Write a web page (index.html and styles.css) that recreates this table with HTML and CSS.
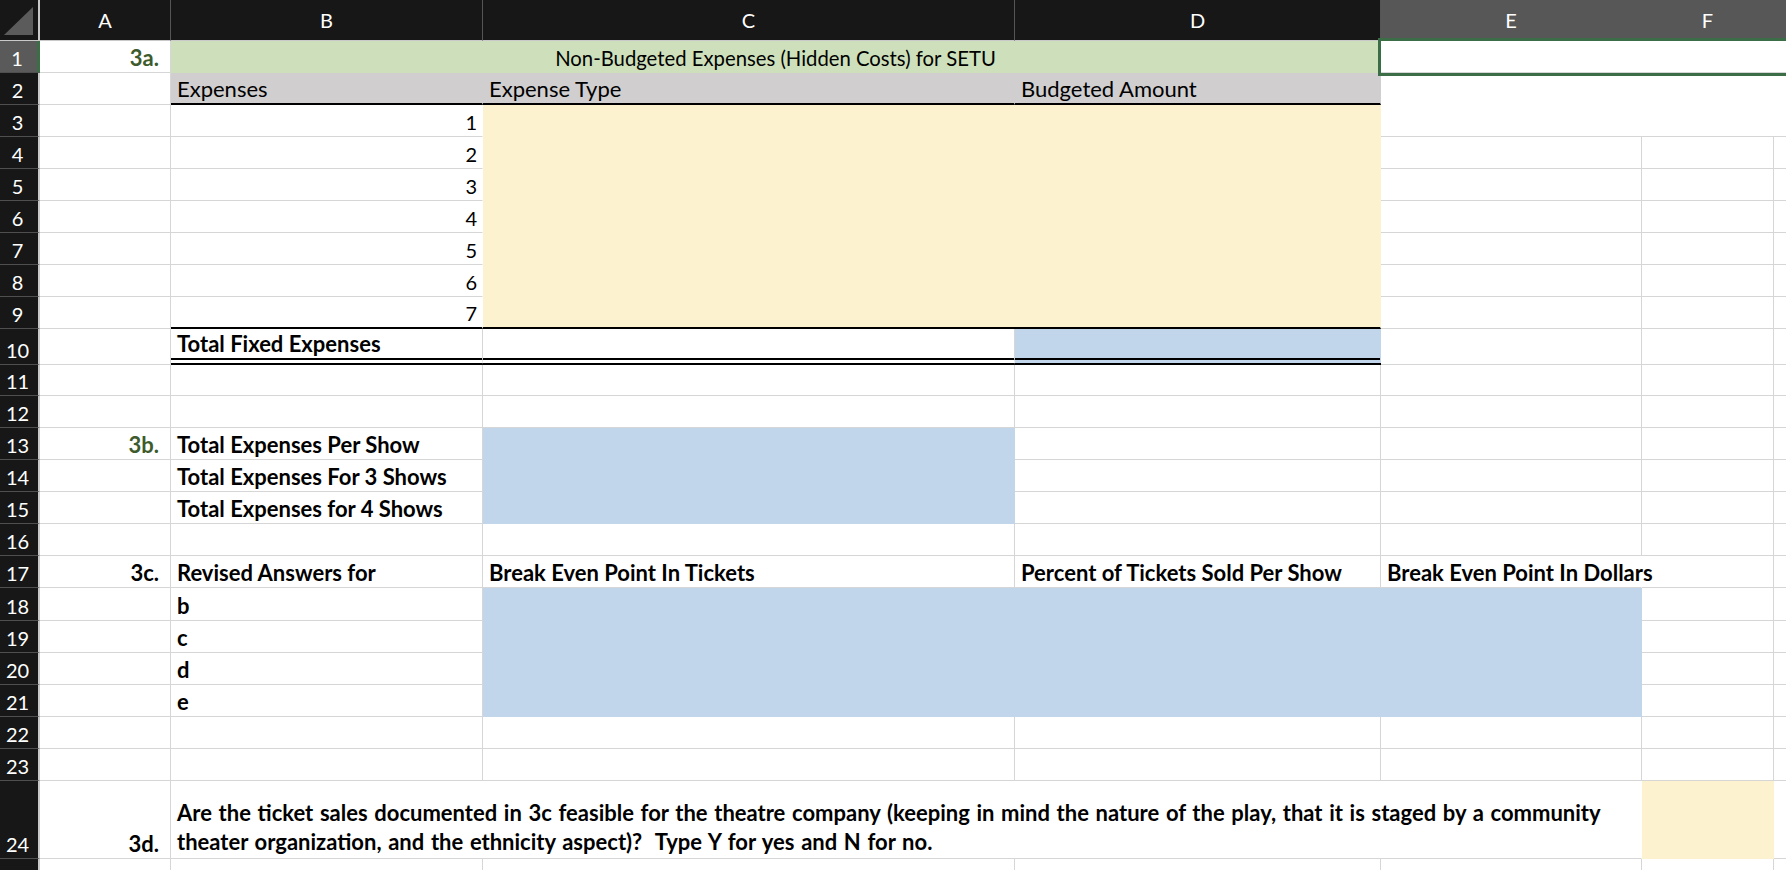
FILE: index.html
```html
<!DOCTYPE html>
<html>
<head>
<meta charset="utf-8">
<link rel="stylesheet" href="styles.css">
</head>
<body>
<div class="sheet">
  <!-- header row -->
  <div class="corner"><svg width="38" height="40" viewBox="0 0 38 40"><polygon points="4,35 33,35 33,7" fill="#5b5b5b"/></svg></div>
  <div class="ch">A</div>
  <div class="ch">B</div>
  <div class="ch">C</div>
  <div class="ch">D</div>
  <div class="ch sel">E</div>
  <div class="ch sel">F</div>
  <div class="ch sel"></div>

  <!-- row 1 -->
  <div class="rh rh-sel">1</div>
  <div class="c colA green b">3a.</div>
  <div class="c title span3">Non-Budgeted Expenses (Hidden Costs) for SETU</div>
  <div class="c selcell span3"><span class="selbox"></span></div>

  <!-- row 2 -->
  <div class="rh">2</div>
  <div class="c"></div>
  <div class="c gray bk2">Expenses</div>
  <div class="c gray bk2">Expense Type</div>
  <div class="c gray bk2">Budgeted Amount</div>
  <div class="c blank-e"></div>

  <!-- row 3 -->
  <div class="rh">3</div>
  <div class="c"></div>
  <div class="c num nor">1</div>
  <div class="c cream cream-block"></div>

  <!-- row 4 -->
  <div class="rh">4</div>
  <div class="c"></div>
  <div class="c num nor">2</div>
  <div class="c"></div><div class="c"></div><div class="c"></div>

  <!-- row 5 -->
  <div class="rh">5</div>
  <div class="c"></div>
  <div class="c num nor">3</div>
  <div class="c"></div><div class="c"></div><div class="c"></div>

  <!-- row 6 -->
  <div class="rh">6</div>
  <div class="c"></div>
  <div class="c num nor">4</div>
  <div class="c"></div><div class="c"></div><div class="c"></div>

  <!-- row 7 -->
  <div class="rh">7</div>
  <div class="c"></div>
  <div class="c num nor">5</div>
  <div class="c"></div><div class="c"></div><div class="c"></div>

  <!-- row 8 -->
  <div class="rh">8</div>
  <div class="c"></div>
  <div class="c num nor">6</div>
  <div class="c"></div><div class="c"></div><div class="c"></div>

  <!-- row 9 -->
  <div class="rh">9</div>
  <div class="c"></div>
  <div class="c num nor bk2">7</div>
  <div class="c"></div><div class="c"></div><div class="c"></div>

  <!-- row 10 -->
  <div class="rh">10</div>
  <div class="c"></div>
  <div class="c b dbl">Total Fixed Expenses</div>
  <div class="c dbl"></div>
  <div class="c blue dbl"></div>
  <div class="c"></div><div class="c"></div><div class="c"></div>

  <!-- row 11 -->
  <div class="rh">11</div>
  <div class="c"></div><div class="c"></div><div class="c"></div><div class="c"></div><div class="c"></div><div class="c"></div><div class="c"></div>

  <!-- row 12 -->
  <div class="rh">12</div>
  <div class="c"></div><div class="c"></div><div class="c"></div><div class="c"></div><div class="c"></div><div class="c"></div><div class="c"></div>

  <!-- row 13 -->
  <div class="rh">13</div>
  <div class="c colA green b">3b.</div>
  <div class="c b">Total Expenses Per Show</div>
  <div class="c blue rows3"></div>
  <div class="c"></div><div class="c"></div><div class="c"></div><div class="c"></div>

  <!-- row 14 -->
  <div class="rh">14</div>
  <div class="c"></div>
  <div class="c b">Total Expenses For 3 Shows</div>
  <div class="c"></div><div class="c"></div><div class="c"></div><div class="c"></div>

  <!-- row 15 -->
  <div class="rh">15</div>
  <div class="c"></div>
  <div class="c b">Total Expenses for 4 Shows</div>
  <div class="c"></div><div class="c"></div><div class="c"></div><div class="c"></div>

  <!-- row 16 -->
  <div class="rh">16</div>
  <div class="c"></div><div class="c"></div><div class="c"></div><div class="c"></div><div class="c"></div><div class="c"></div><div class="c"></div>

  <!-- row 17 -->
  <div class="rh">17</div>
  <div class="c colA b">3c.</div>
  <div class="c b">Revised Answers for</div>
  <div class="c b">Break Even Point In Tickets</div>
  <div class="c b">Percent of Tickets Sold Per Show</div>
  <div class="c b nor">Break Even Point In Dollars</div>
  <div class="c"></div>
  <div class="c"></div>

  <!-- row 18 -->
  <div class="rh">18</div>
  <div class="c"></div>
  <div class="c b">b</div>
  <div class="c blue blue-block"></div>
  <div class="c"></div><div class="c"></div>

  <!-- row 19 -->
  <div class="rh">19</div>
  <div class="c"></div>
  <div class="c b">c</div>
  <div class="c"></div><div class="c"></div>

  <!-- row 20 -->
  <div class="rh">20</div>
  <div class="c"></div>
  <div class="c b">d</div>
  <div class="c"></div><div class="c"></div>

  <!-- row 21 -->
  <div class="rh">21</div>
  <div class="c"></div>
  <div class="c b">e</div>
  <div class="c"></div><div class="c"></div>

  <!-- row 22 -->
  <div class="rh">22</div>
  <div class="c"></div><div class="c"></div><div class="c"></div><div class="c"></div><div class="c"></div><div class="c"></div><div class="c"></div>

  <!-- row 23 -->
  <div class="rh">23</div>
  <div class="c"></div><div class="c"></div><div class="c"></div><div class="c"></div><div class="c"></div><div class="c"></div><div class="c"></div>

  <!-- row 24 -->
  <div class="rh">24</div>
  <div class="c colA b">3d.</div>
  <div class="c b question span4">Are the ticket sales documented in 3c feasible for the theatre company (keeping in mind the nature of the play, that it is staged by a community<br>theater organization, and the ethnicity aspect)?&nbsp; Type Y for yes and N for no.</div>
  <div class="c cream"></div>
  <div class="c"></div>

  <!-- row 25 -->
  <div class="rh">25</div>
  <div class="c"></div><div class="c"></div><div class="c"></div><div class="c"></div><div class="c"></div><div class="c"></div><div class="c"></div>
</div>
</body>
</html>
```
FILE: styles.css
```css
html, body {
  margin: 0;
  padding: 0;
  background: #ffffff;
  overflow: hidden;
}

.sheet {
  display: grid;
  grid-template-columns: 40px 131px 312px 532px 366px 261px 132px 1fr;
  grid-template-rows: 41px repeat(9, 32px) 36px 31px repeat(6, 32px) 33px repeat(5, 32px) 78px 40px;
  width: 1786px;
  height: 870px;
  overflow: hidden;
  font-family: Lato, "Liberation Sans", sans-serif;
  font-size: 20px;
  color: #000;
}

.corner {
  background: #171717;
  border-right: 2px solid #c9c9c9;
  border-bottom: 1px solid #c9c9c9;
  box-sizing: border-box;
}
.corner svg { display: block; }

.ch {
  box-sizing: border-box;
  background: #171717;
  color: #fff;
  border-right: 1px solid #555;
  border-bottom: 1px solid #c9c9c9;
  display: flex;
  align-items: center;
  justify-content: center;
  font-size: 20px;
}
.ch.sel {
  background: #575757;
  border-right-color: #575757;
}

.rh {
  box-sizing: border-box;
  background: #171717;
  color: #fff;
  border-right: 2px solid #c9c9c9;
  border-bottom: 1px solid #4f4f4f;
  display: flex;
  align-items: flex-end;
  justify-content: center;
  padding: 0 3px 4px 0;
  line-height: 20px;
  font-size: 20px;
}
.rh-sel {
  background: #5a5a5a;
  border-right: 3px solid #3b6e47;
}

.c {
  box-sizing: border-box;
  border-right: 1px solid #d6d6d6;
  border-bottom: 1px solid #d6d6d6;
  display: flex;
  align-items: flex-end;
  padding: 0 6px 4px 6px;
  line-height: 20px;
  white-space: nowrap;
  min-width: 0;
}

.b { font-weight: 700; font-size: 22px; }
.colA { justify-content: flex-end; padding-right: 11px; }
.green { color: #3d5b2c; }
.num { justify-content: flex-end; padding-right: 5px; }
.nor { border-right-color: transparent; }

.span3 { grid-column: span 3; }
.span4 { grid-column: span 4; }
.rows3 { grid-row: span 3; }

.title {
  background: #cde0bb;
  border-color: transparent;
  justify-content: center;
  padding-left: 0;
  padding-right: 0;
  font-size: 20.3px;
}

.selcell {
  position: relative;
  border-right-color: transparent;
}
.selbox {
  position: absolute;
  left: -3px;
  top: -3px;
  right: -20px;
  bottom: -4px;
  border: 3px solid #3b6e47;
}

.gray {
  background: #d0cecf;
  border-right-color: transparent;
  font-size: 22px;
}
.bk2 { border-bottom: 2px solid #000; }
.dbl { border-bottom: 7px double #000; }

.blank-e {
  grid-column: span 3;
  grid-row: span 2;
  border-right-color: transparent;
}

.cream { background: #fdf2d0; border-color: transparent; }
.cream-block {
  grid-column: span 2;
  grid-row: span 7;
  border-bottom: 2px solid #000;
}

.blue { background: #c1d6eb; border-right-color: transparent; }
.blue.rows3 { border-bottom-color: transparent; }
.blue-block {
  grid-column: span 3;
  grid-row: span 4;
  border-bottom-color: transparent;
}

.question {
  line-height: 29px;
  padding-bottom: 2px;
  word-spacing: 1.3px;
  border-right-color: transparent;
}
```
